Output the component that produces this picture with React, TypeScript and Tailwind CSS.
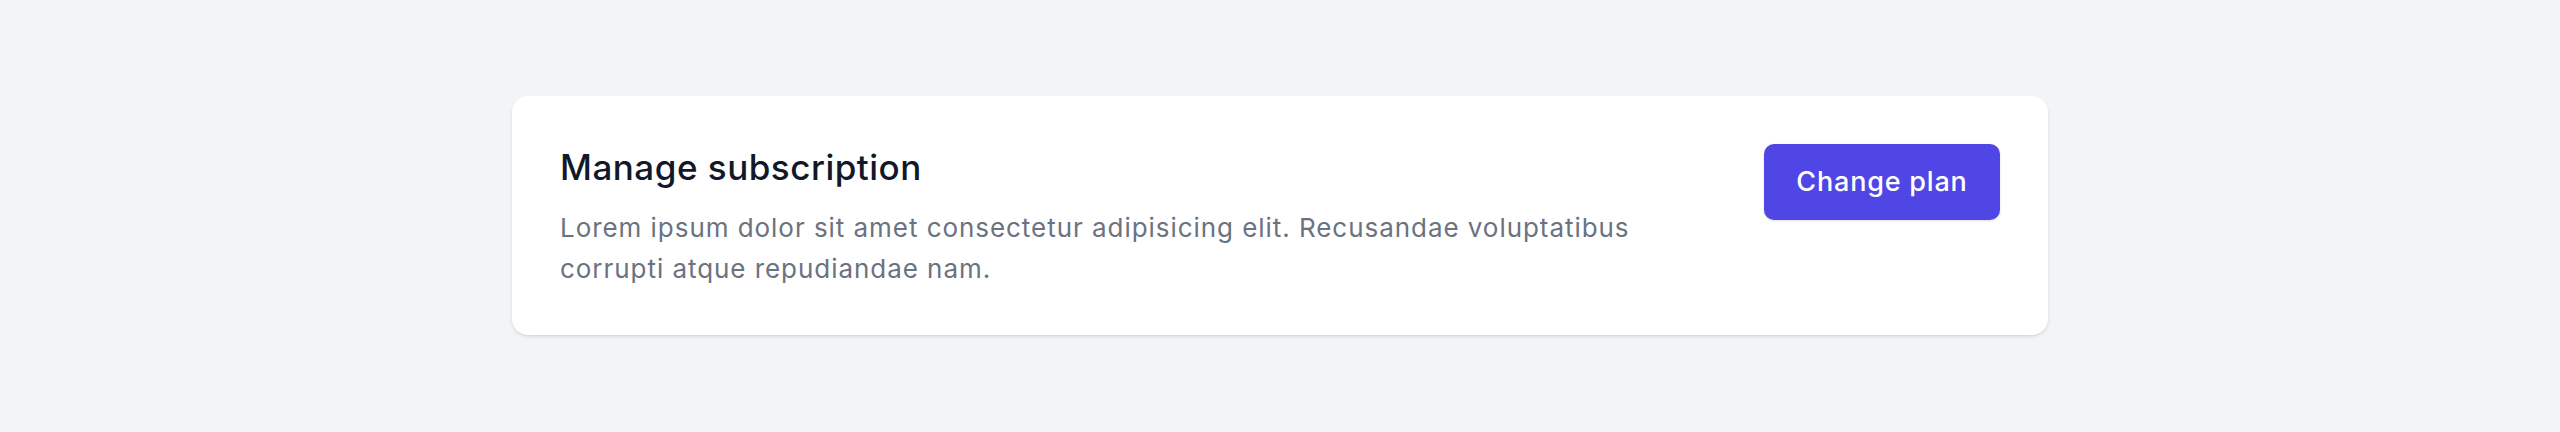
export default function App() {
  return (
    <div
      className="min-h-[432px] bg-[#f3f4f6] py-[96px]"
      style={{ fontFamily: 'Inter, "Noto Sans", sans-serif' }}
    >
      <div className="mx-auto w-[1536px] rounded-[16px] bg-white px-12 pt-12 pb-[46px] shadow-[0_2px_4px_rgba(0,0,0,0.08),0_1px_2px_rgba(0,0,0,0.06)]">
        <div className="flex items-start justify-between gap-12">
          <div className="w-[1100px]">
            <h3 className="text-[35px] leading-[47px] font-medium tracking-[0.5px] text-[#111827]">
              Manage subscription
            </h3>
            <p className="mt-4 text-[26px] leading-[41px] tracking-[0.95px] text-[#6b7280]">
              Lorem ipsum dolor sit amet consectetur adipisicing elit. Recusandae voluptatibus corrupti atque
              repudiandae nam.
            </p>
          </div>
          <button className="h-[76px] w-[236px] shrink-0 rounded-[10px] bg-[#4f46e5] text-[27px] font-medium tracking-[0.8px] text-white shadow-sm">
            Change plan
          </button>
        </div>
      </div>
    </div>
  );
}
